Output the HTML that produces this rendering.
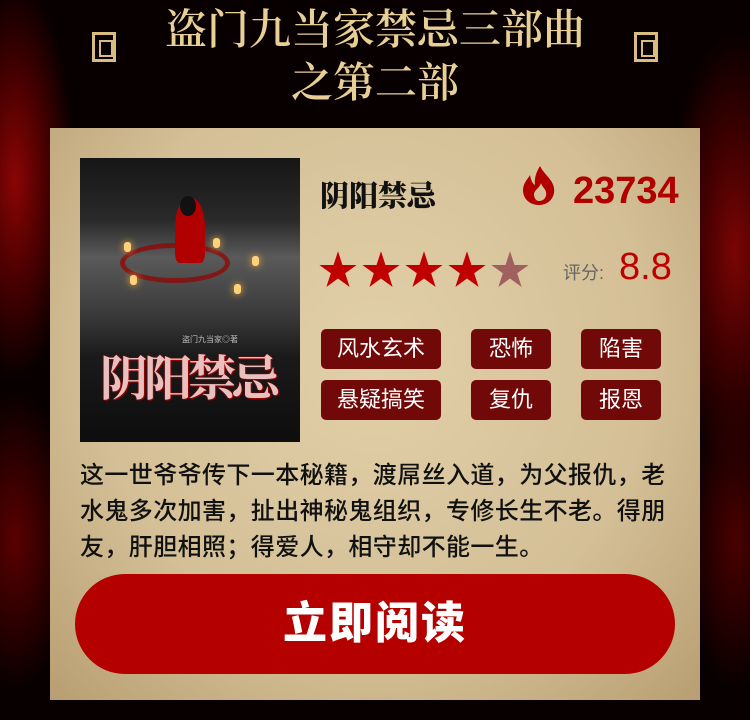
<!DOCTYPE html>
<html><head><meta charset="utf-8"><style>
*{margin:0;padding:0;box-sizing:border-box}
body{width:750px;height:720px;overflow:hidden;position:relative;font-family:"Liberation Sans","Noto Sans CJK SC",sans-serif;
background:radial-gradient(ellipse 60px 200px at 2% 25%,#8a0505 0,#4a0000 50%,transparent 100%),radial-gradient(ellipse 70px 220px at 98% 35%,#7a0505 0,#400000 50%,transparent 100%),radial-gradient(ellipse 60px 150px at 2% 75%,#5a0000 0,transparent 100%),radial-gradient(ellipse 50px 150px at 98% 75%,#4a0000 0,transparent 100%),#080000}
.title{position:absolute;top:1px;left:0;width:750px;text-align:center;color:#e8cf96;font-family:"Noto Serif CJK SC",serif;font-size:42px;font-weight:600;line-height:53px}
.orn{position:absolute;top:32px;width:24px;height:30px;border:3px solid #d9bd80}
.orn:after{content:"";position:absolute;left:4px;top:5px;width:10px;height:13px;border:2px solid #d9bd80}
.panel{position:absolute;left:50px;top:128px;width:650px;height:572px;background:radial-gradient(ellipse at 50% 40%,#e2d0aa 0,#d4bf96 60%,#b89e72 100%)}
.cover{position:absolute;left:80px;top:158px;width:220px;height:284px;overflow:hidden;background:linear-gradient(#161616 0,#2a2a2a 22%,#5a5a5a 35%,#3a3a3a 55%,#1a1a1a 70%,#0d0d0d 100%)}
.cover .ring{position:absolute;left:40px;top:85px;width:110px;height:40px;border-radius:50%;border:5px solid rgba(150,0,0,.7)}
.cover .fig{position:absolute;left:95px;top:40px;width:30px;height:65px;background:#b00000;border-radius:45% 45% 15% 15%}
.cover .head{position:absolute;left:100px;top:38px;width:16px;height:20px;background:#111;border-radius:50%}
.cd{position:absolute;width:7px;height:10px;background:#ffd27a;box-shadow:0 0 8px #ffb040;border-radius:3px}
.cover .au{position:absolute;left:102px;top:176px;font-size:8px;color:#bbb}
.cover .ct{position:absolute;left:20px;top:182px;font-family:"Noto Serif CJK SC",serif;font-size:48px;color:#e8c0c0;font-weight:bold;letter-spacing:-4px;text-shadow:0 0 2px #a00,1px 1px 0 #900}
.bn{position:absolute;left:320px;top:174px;font-size:29px;font-weight:900;color:#111;font-family:"Noto Serif CJK SC",serif}
.hot{position:absolute;left:573px;top:170px;font-size:38px;font-weight:bold;color:#b00000}
.stars{position:absolute;left:318px;top:249px;font-size:40px;color:#c00000;letter-spacing:3px;line-height:44px}
.sc{position:absolute;left:563px;top:259px;font-size:18px;color:#666}
.sv{position:absolute;left:619px;top:246px;font-size:38px;color:#c00000}
.tag{position:absolute;height:40px;background:#720909;color:#fff;border-radius:5px;font-size:22px;line-height:40px;text-align:center}
.desc{position:absolute;left:80px;top:458px;width:595px;font-size:24px;letter-spacing:0.4px;line-height:36px;color:#111;font-weight:500}
.btn{position:absolute;left:75px;top:574px;width:600px;height:100px;border-radius:50px;background:#b50000;color:#fff;font-size:44px;font-weight:900;text-align:center;line-height:100px;letter-spacing:2px}
</style></head><body>
<div class="title">盗门九当家禁忌三部曲<br>之第二部</div>
<div class="orn" style="left:92px"></div><div class="orn" style="left:634px"></div>
<div class="panel"></div>
<div class="cover"><div class="ring"></div><div class="fig"></div><div class="head"></div>
<div class="cd" style="left:44px;top:84px"></div><div class="cd" style="left:133px;top:80px"></div><div class="cd" style="left:172px;top:98px"></div><div class="cd" style="left:50px;top:117px"></div><div class="cd" style="left:154px;top:126px"></div>
<div class="au">盗门九当家◎著</div><div class="ct">阴阳禁忌</div></div>
<div class="bn">阴阳禁忌</div>
<svg style="position:absolute;left:520px;top:165px" width="38" height="40" viewBox="0 0 38 40"><path d="M20 1C24 10 36 16 34 28 32 37 25 40 19 40 10 40 3 34 3 25 3 18 8 14 10 10 11 16 13 19 15 20 14 12 17 6 20 1ZM19 36C24 36 27 32 26 27 25 23 22 22 21 18 19 24 15 24 14 29 14 33 16 36 19 36Z" fill="#b00000"/></svg>
<div class="hot">23734</div>
<div class="stars">★★★★<span style="color:#a06060">★</span></div>
<div class="sc">评分:</div><div class="sv">8.8</div>
<div class="tag" style="left:321px;top:329px;width:120px">风水玄术</div>
<div class="tag" style="left:471px;top:329px;width:80px">恐怖</div>
<div class="tag" style="left:581px;top:329px;width:80px">陷害</div>
<div class="tag" style="left:321px;top:380px;width:120px">悬疑搞笑</div>
<div class="tag" style="left:471px;top:380px;width:80px">复仇</div>
<div class="tag" style="left:581px;top:380px;width:80px">报恩</div>
<div class="desc">这一世爷爷传下一本秘籍，渡屌丝入道，为父报仇，老水鬼多次加害，扯出神秘鬼组织，专修长生不老。得朋友，肝胆相照；得爱人，相守却不能一生。</div>
<div class="btn">立即阅读</div>
</body></html>
